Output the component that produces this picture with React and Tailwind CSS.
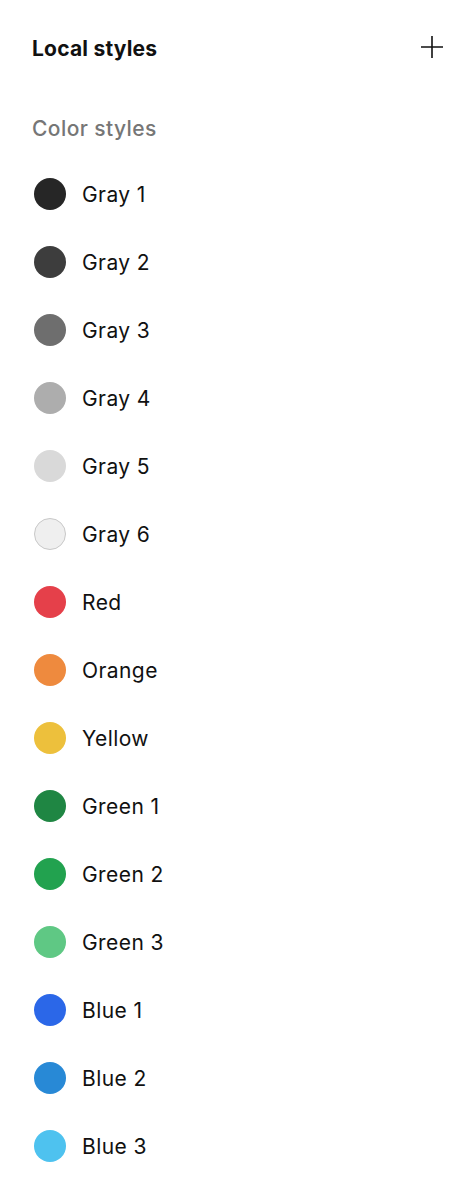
import React from "react";

const colors = [
  ["Gray 1", "#262626"],
  ["Gray 2", "#3d3d3d"],
  ["Gray 3", "#6e6e6e"],
  ["Gray 4", "#adadad"],
  ["Gray 5", "#d9d9d9"],
  ["Gray 6", "#efefef", true],
  ["Red", "#e5404a"],
  ["Orange", "#ee8a3e"],
  ["Yellow", "#edc03c"],
  ["Green 1", "#1f8643"],
  ["Green 2", "#22a24f"],
  ["Green 3", "#5fc884"],
  ["Blue 1", "#2b67e8"],
  ["Blue 2", "#2889d6"],
  ["Blue 3", "#4ec2ef"],
];

export default function App() {
  return (
    <div
      className="w-[468px] h-[1184px] bg-white px-8 overflow-hidden"
      style={{ fontFamily: "Inter, 'Noto Sans', sans-serif" }}
    >
      <div className="pt-[28px] h-[68px] flex items-start">
        <div className="h-10 flex-1 flex items-center justify-between">
          <span className="pt-[2px] text-[21px] font-bold text-[#111] tracking-[0.01em]">Local styles</span>
          <svg width="22" height="22" viewBox="0 0 22 22" className="mr-[-7px] mt-[-2px]">
            <path d="M11 0V22M0 11H22" stroke="#111" strokeWidth="1.6" fill="none" />
          </svg>
        </div>
      </div>
      <div className="mt-10 h-10 flex items-center">
        <span className="pt-[2px] text-[21px] font-medium text-[#767676] tracking-[0.02em]">Color styles</span>
      </div>
      <div className="mt-3 flex flex-col">
        {colors.map(([name, c, border]) => (
          <div key={name} className="h-[68px] flex items-center gap-4">
            <div
              className={
                "ml-[2px] w-8 h-8 rounded-full shrink-0 " +
                (border ? "border border-[#c8c8c8]" : "")
              }
              style={{ backgroundColor: c }}
            />
            <span className="pt-[2px] text-[21px] text-[#111] tracking-[0.02em]">{name}</span>
          </div>
        ))}
      </div>
    </div>
  );
}
